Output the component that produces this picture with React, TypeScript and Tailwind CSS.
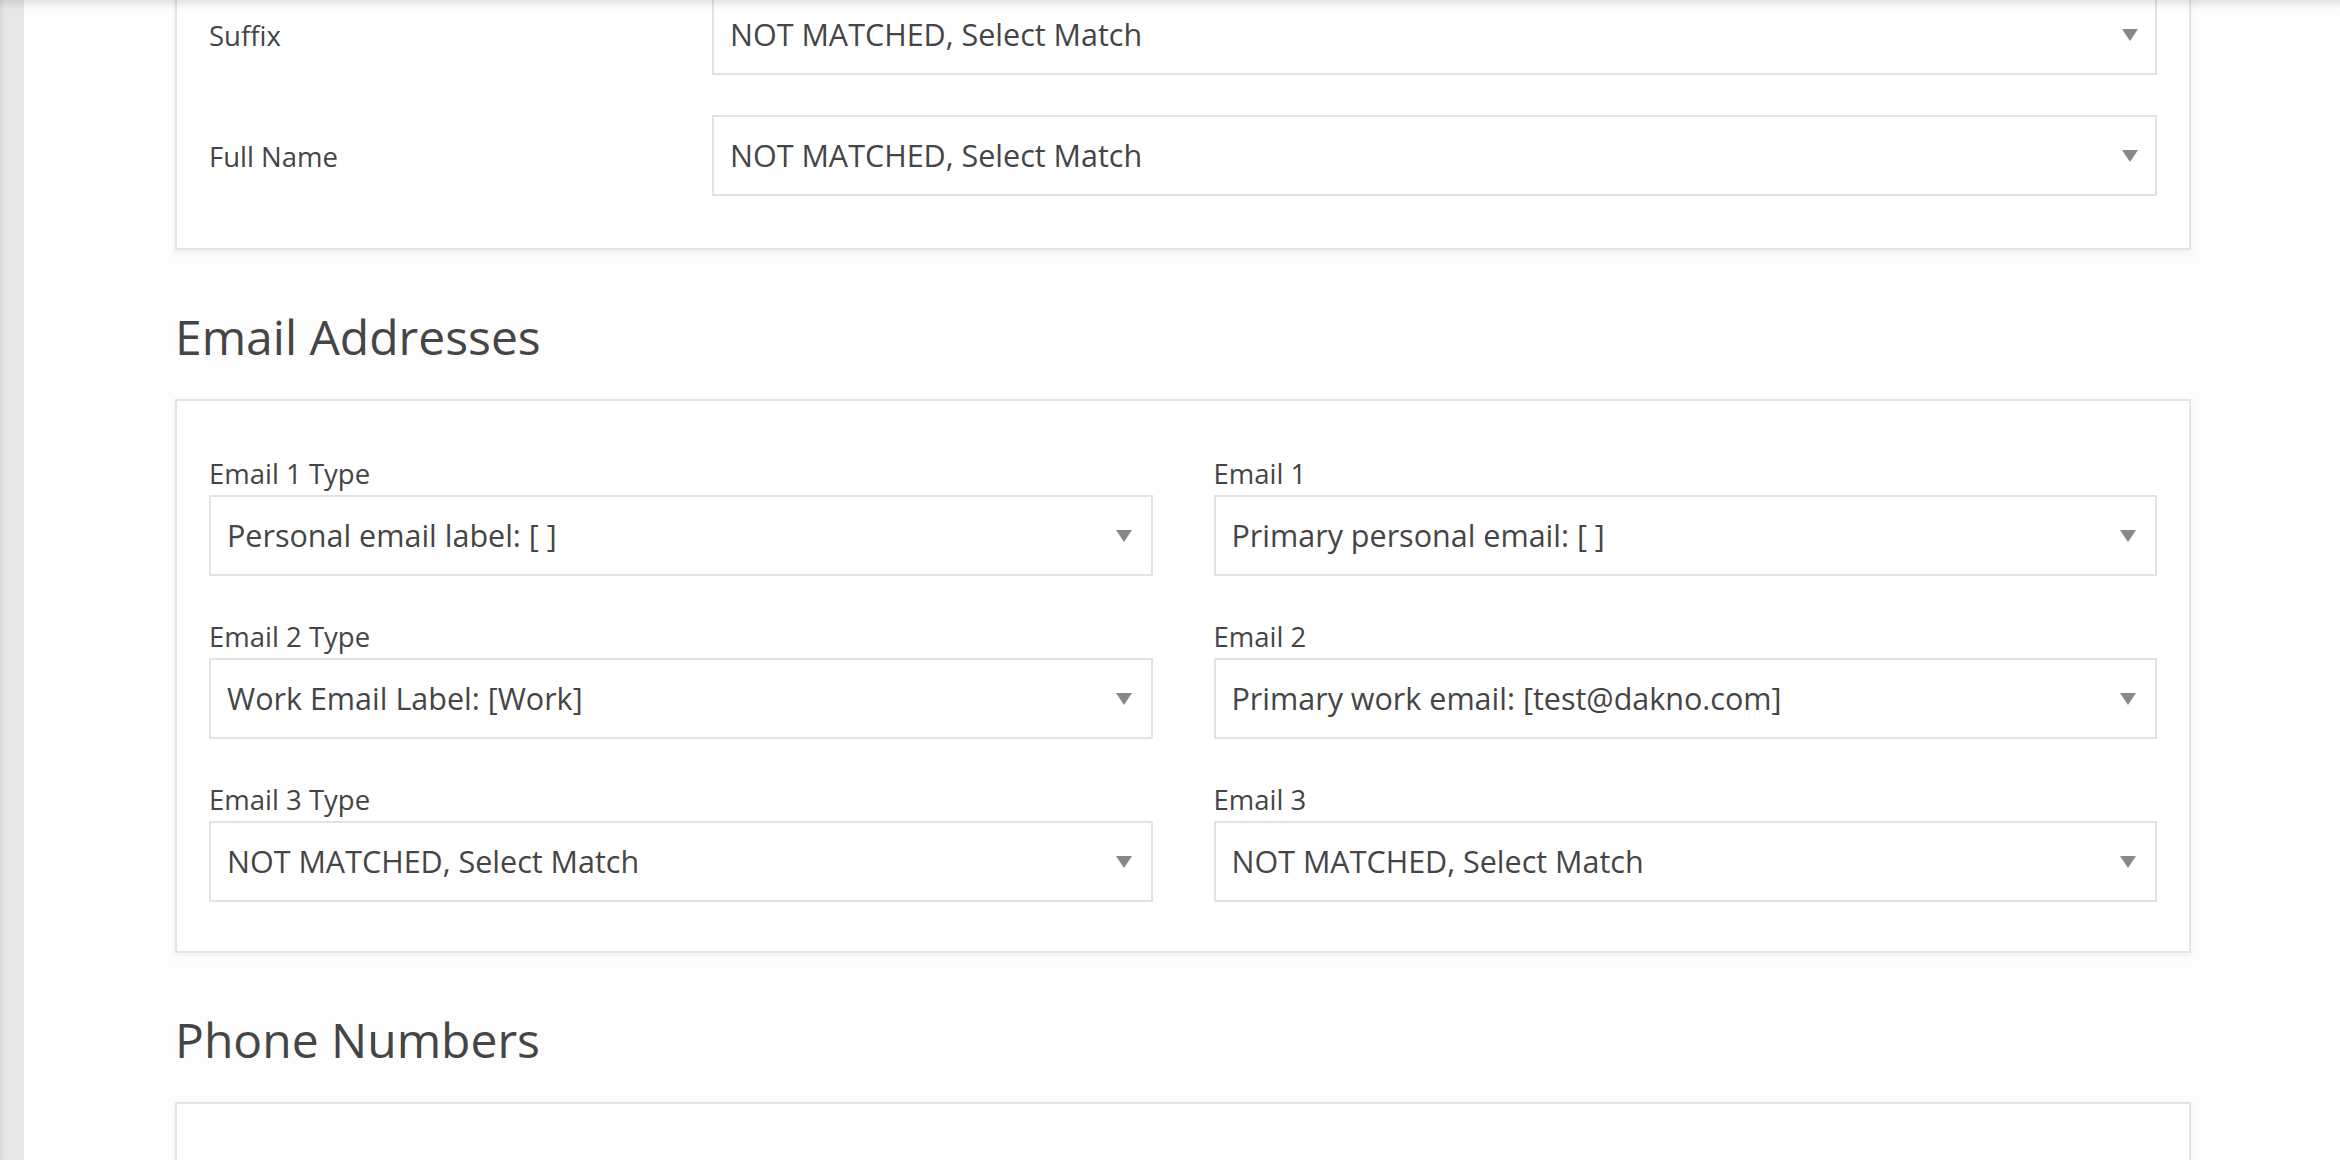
import { ReactNode } from 'react'

const font = { fontFamily: '"Open Sans", "Noto Sans", sans-serif' }

function Caret() {
  return (
    <svg width="16" height="12" viewBox="0 0 16 12" className="shrink-0">
      <path d="M0 0 H16 L8 12 Z" fill="#888888" />
    </svg>
  )
}

function Dropdown({ value, caretGap = 'pr-[17px]' }: { value: string; caretGap?: string }) {
  return (
    <div
      className={`flex h-[81px] w-full items-center justify-between border-2 border-[#e2e2e2] bg-white pl-[16px] ${caretGap}`}
    >
      <span className="whitespace-nowrap text-[30.5px] leading-normal text-[#454545]">{value}</span>
      <Caret />
    </div>
  )
}

function Card({ children, className = '' }: { children?: ReactNode; className?: string }) {
  return (
    <div
      className={`border-2 border-[#e4e4e4] bg-white shadow-[0_3px_8px_rgba(0,0,0,0.05)] ${className}`}
    >
      {children}
    </div>
  )
}

function InlineRow({ label, value }: { label: string; value: string }) {
  return (
    <div className="flex items-center">
      <div className="w-[503px] shrink-0 pt-[2px] text-[27.5px] text-[#454545]">{label}</div>
      <Dropdown value={value} />
    </div>
  )
}

function StackedField({ label, value }: { label: string; value: string }) {
  return (
    <div className="flex flex-col">
      <label className="mb-[3px] text-[27.5px] leading-[36px] text-[#454545]">{label}</label>
      <Dropdown value={value} caretGap="pr-[19px]" />
    </div>
  )
}

function SectionTitle({ children }: { children: ReactNode }) {
  return (
    <h2 className="mt-[58px] mb-[33px] text-[48px] leading-[58px] font-normal text-[#454545]">
      {children}
    </h2>
  )
}

export default function App() {
  const emails = [
    ['Email 1 Type', 'Personal email label: [ ]', 'Email 1', 'Primary personal email: [ ]'],
    ['Email 2 Type', 'Work Email Label: [Work]', 'Email 2', 'Primary work email: [test@dakno.com]'],
    ['Email 3 Type', 'NOT MATCHED, Select Match', 'Email 3', 'NOT MATCHED, Select Match'],
  ]

  return (
    <div style={font} className="relative flex h-[1160px] overflow-hidden bg-[#fdfdfd]">
      <div className="pointer-events-none absolute inset-x-0 top-0 z-10 h-[10px] bg-gradient-to-b from-black/10 to-transparent" />
      <div className="w-[24px] shrink-0 border-l-[3px] border-[#dcdcdc] bg-[#e7e7e7]" />

      <main className="ml-[151px] w-[2016px] shrink-0">
        <Card className="-mt-[39px] px-[32px] pt-[31px] pb-[52px]">
          <div className="flex flex-col gap-[40px]">
            <InlineRow label="Suffix" value="NOT MATCHED, Select Match" />
            <InlineRow label="Full Name" value="NOT MATCHED, Select Match" />
          </div>
        </Card>

        <SectionTitle>Email Addresses</SectionTitle>

        <Card className="px-[32px] pt-[55px] pb-[49px]">
          <div className="grid grid-cols-2 gap-x-[61px] gap-y-[43px]">
            {emails.map(([l1, v1, l2, v2]) => (
              <div key={l1} className="contents">
                <StackedField label={l1} value={v1} />
                <StackedField label={l2} value={v2} />
              </div>
            ))}
          </div>
        </Card>

        <SectionTitle>Phone Numbers</SectionTitle>

        <Card className="h-[200px]" />
      </main>
    </div>
  )
}
